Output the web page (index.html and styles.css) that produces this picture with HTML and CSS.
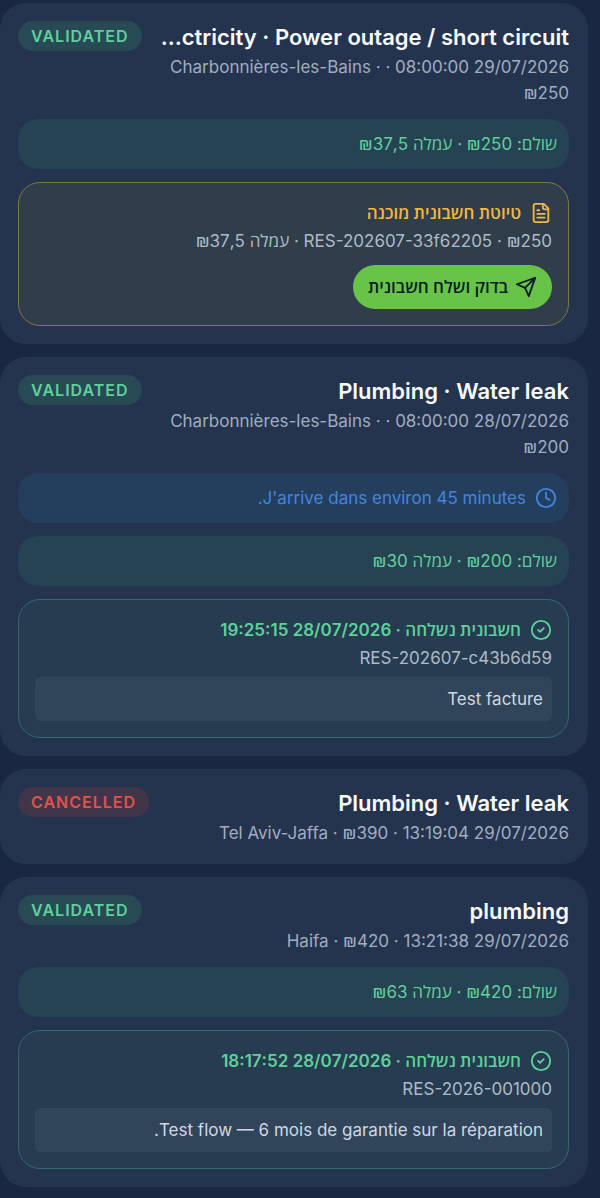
FILE: index.html
```html
<!DOCTYPE html>
<html lang="he" dir="rtl">
  <head>
    <meta charset="UTF-8" />
    <meta name="viewport" content="width=device-width, initial-scale=1.0" />
    <title>Reservations</title>
    <link rel="stylesheet" href="styles.css">
  </head>
  <body>
    <main class="job-list">
      <article class="card">
        <header class="card-header">
          <div class="card-info">
            <h2>Electricity · Power outage / short circuit</h2>
            <p class="meta">29/07/2026 08:00:00 · Charbonnières-les-Bains · ₪250</p>
          </div>
          <span class="badge badge-validated">VALIDATED</span>
        </header>
        <p class="strip strip-paid">שולם: ₪250 · עמלה ₪37,5</p>
        <section class="invoice invoice-draft">
          <h3>
            <svg class="icon" viewBox="0 0 24 24" aria-hidden="true">
              <path d="M15 2H6a2 2 0 0 0-2 2v16a2 2 0 0 0 2 2h12a2 2 0 0 0 2-2V7Z" />
              <path d="M14 2v4a2 2 0 0 0 2 2h4" />
              <path d="M10 9H8M16 13H8M16 17H8" />
            </svg>
            טיוטת חשבונית מוכנה
          </h3>
          <p class="ref">₪250 · RES-202607-33f62205 · עמלה ₪37,5</p>
          <button type="button" class="send-button">
            <svg class="icon" viewBox="0 0 24 24" aria-hidden="true">
              <path d="m22 2-7 20-4-9-9-4Z" />
              <path d="M22 2 11 13" />
            </svg>
            בדוק ושלח חשבונית
          </button>
        </section>
      </article>

      <article class="card">
        <header class="card-header">
          <div class="card-info">
            <h2>Plumbing · Water leak</h2>
            <p class="meta">28/07/2026 08:00:00 · Charbonnières-les-Bains · ₪200</p>
          </div>
          <span class="badge badge-validated">VALIDATED</span>
        </header>
        <p class="strip strip-eta">
          <svg class="icon" viewBox="0 0 24 24" aria-hidden="true">
            <circle cx="12" cy="12" r="10" />
            <path d="M12 6v6l4 2" />
          </svg>
          J'arrive dans environ 45 minutes.
        </p>
        <p class="strip strip-paid">שולם: ₪200 · עמלה ₪30</p>
        <section class="invoice invoice-sent">
          <h3>
            <svg class="icon" viewBox="0 0 24 24" aria-hidden="true">
              <circle cx="12" cy="12" r="10" />
              <path d="m9 12 2 2 4-4" />
            </svg>
            חשבונית נשלחה · 28/07/2026 19:25:15
          </h3>
          <p class="ref">RES-202607-c43b6d59</p>
          <p class="note">Test facture</p>
        </section>
      </article>

      <article class="card">
        <header class="card-header">
          <div class="card-info">
            <h2>Plumbing · Water leak</h2>
            <p class="meta">29/07/2026 13:19:04 · Tel Aviv-Jaffa · ₪390</p>
          </div>
          <span class="badge badge-cancelled">CANCELLED</span>
        </header>
      </article>

      <article class="card">
        <header class="card-header">
          <div class="card-info">
            <h2>plumbing</h2>
            <p class="meta">29/07/2026 13:21:38 · Haifa · ₪420</p>
          </div>
          <span class="badge badge-validated">VALIDATED</span>
        </header>
        <p class="strip strip-paid">שולם: ₪420 · עמלה ₪63</p>
        <section class="invoice invoice-sent">
          <h3>
            <svg class="icon" viewBox="0 0 24 24" aria-hidden="true">
              <circle cx="12" cy="12" r="10" />
              <path d="m9 12 2 2 4-4" />
            </svg>
            חשבונית נשלחה · 28/07/2026 18:17:52
          </h3>
          <p class="ref">RES-2026-001000</p>
          <p class="note">Test flow — 6 mois de garantie sur la réparation.</p>
        </section>
      </article>
    </main>
  </body>
</html>
```
FILE: styles.css
```css
:root {
  --background-color: #192743;
  --card-color: #25344e;
  --text-color: #f8fafc;
  --muted-color: #a0adc1;
  --green: #5fd09a;
  --blue: #4285e0;
  --amber: #efb944;
  --red: #e0524a;
}

* {
  box-sizing: border-box;
}

body {
  margin: 0;
  background-color: var(--background-color);
  color: var(--text-color);
  font-family: Inter, "Open Sans", "Liberation Sans", sans-serif;
  font-size: 17px;
  line-height: 26px;
}

h2,
h3,
p {
  margin: 0;
}

.job-list {
  display: flex;
  flex-direction: column;
  gap: 13px;
  padding: 3px 12px 10px 0;
}

.card {
  display: flex;
  flex-direction: column;
  gap: 13px;
  padding: 18px 19px 18px 18px;
  border-radius: 26px;
  background-color: var(--card-color);
}

.card-header {
  display: flex;
  align-items: flex-start;
  justify-content: space-between;
  gap: 18px;
}

.card-info {
  flex: 1;
  min-width: 0;
}

.card h2 {
  overflow: hidden;
  font-size: 22px;
  font-weight: 600;
  line-height: 33px;
  text-overflow: ellipsis;
  white-space: nowrap;
}

.meta {
  color: var(--muted-color);
}

.badge {
  flex-shrink: 0;
  padding: 0 13px;
  border-radius: 15px;
  font-size: 16px;
  font-weight: 600;
  letter-spacing: 1px;
  line-height: 30px;
}

.badge-validated {
  background-color: #274a55;
  color: var(--green);
}

.badge-cancelled {
  background-color: #41354a;
  color: var(--red);
}

.icon {
  flex-shrink: 0;
  width: 22px;
  height: 22px;
  fill: none;
  stroke: currentColor;
  stroke-width: 2;
  stroke-linecap: round;
  stroke-linejoin: round;
}

.strip {
  display: flex;
  align-items: center;
  gap: 9px;
  padding: 12px;
  border-radius: 20px;
}

.strip-paid {
  background-color: #264354;
  color: var(--green);
}

.strip-eta {
  background-color: #243e5e;
  color: var(--blue);
}

.invoice {
  padding: 16px;
  border: 1px solid;
  border-radius: 22px;
}

.invoice h3 {
  display: flex;
  align-items: center;
  gap: 9px;
  font-size: 17px;
  font-weight: 600;
  line-height: 28px;
}

.invoice-draft {
  border-color: #85763f;
  background-color: #303d4a;
}

.invoice-draft h3 {
  color: var(--amber);
}

.invoice-sent {
  border-color: #356a6d;
  background-color: #263c50;
}

.invoice-sent h3 {
  color: var(--green);
}

.ref {
  color: #afbac8;
  line-height: 29px;
}

.note {
  margin-top: 4px;
  padding: 9px;
  border-radius: 5px;
  background-color: #304559;
  color: #cfd8e3;
}

.send-button {
  display: flex;
  align-items: center;
  gap: 7px;
  margin-top: 9px;
  padding: 9px 15px;
  border: none;
  border-radius: 22px;
  background-color: #67c449;
  color: #0b1a26;
  cursor: pointer;
  font: inherit;
  font-weight: 600;
}
```
